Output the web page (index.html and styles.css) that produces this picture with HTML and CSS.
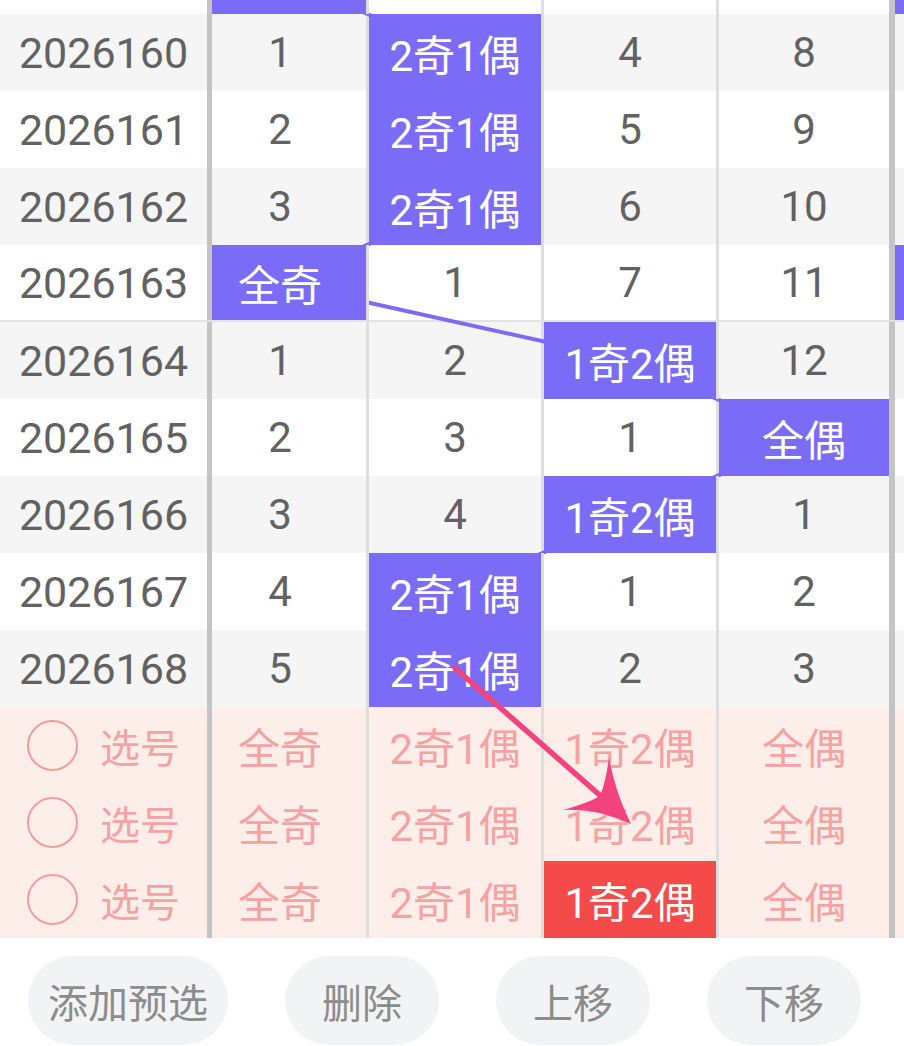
FILE: index.html
```html
<!DOCTYPE html>
<html lang="zh-CN">
<head>
  <meta charset="UTF-8" />
  <meta name="viewport" content="width=device-width, initial-scale=1.0"/>
  <title>奇偶走势</title>
  <link rel="stylesheet" href="styles.css">
</head>
<body>

  <div class="page">
    <div class="grid-view">
      <div class="grid-rows">

        <!-- строка прокручена за верхний край, видна только полоска -->
        <div class="row">
          <div class="issue"></div>
          <div class="cells">
            <div class="cell hit"></div>
            <div class="cell"></div>
            <div class="cell"></div>
            <div class="cell"></div>
            <div class="cell hit"></div>
          </div>
        </div>

        <div class="row odd">
          <div class="issue">2026160</div>
          <div class="cells">
            <div class="cell">1</div>
            <div class="cell hit">2奇1偶</div>
            <div class="cell">4</div>
            <div class="cell">8</div>
            <div class="cell"></div>
          </div>
        </div>

        <div class="row">
          <div class="issue">2026161</div>
          <div class="cells">
            <div class="cell">2</div>
            <div class="cell hit">2奇1偶</div>
            <div class="cell">5</div>
            <div class="cell">9</div>
            <div class="cell"></div>
          </div>
        </div>

        <div class="row odd">
          <div class="issue">2026162</div>
          <div class="cells">
            <div class="cell">3</div>
            <div class="cell hit">2奇1偶</div>
            <div class="cell">6</div>
            <div class="cell">10</div>
            <div class="cell"></div>
          </div>
        </div>

        <div class="row group-end">
          <div class="issue">2026163</div>
          <div class="cells">
            <div class="cell hit">全奇</div>
            <div class="cell">1</div>
            <div class="cell">7</div>
            <div class="cell">11</div>
            <div class="cell hit"></div>
          </div>
        </div>

        <div class="row odd">
          <div class="issue">2026164</div>
          <div class="cells">
            <div class="cell">1</div>
            <div class="cell">2</div>
            <div class="cell hit">1奇2偶</div>
            <div class="cell">12</div>
            <div class="cell"></div>
          </div>
        </div>

        <div class="row">
          <div class="issue">2026165</div>
          <div class="cells">
            <div class="cell">2</div>
            <div class="cell">3</div>
            <div class="cell">1</div>
            <div class="cell hit">全偶</div>
            <div class="cell"></div>
          </div>
        </div>

        <div class="row odd">
          <div class="issue">2026166</div>
          <div class="cells">
            <div class="cell">3</div>
            <div class="cell">4</div>
            <div class="cell hit">1奇2偶</div>
            <div class="cell">1</div>
            <div class="cell"></div>
          </div>
        </div>

        <div class="row">
          <div class="issue">2026167</div>
          <div class="cells">
            <div class="cell">4</div>
            <div class="cell hit">2奇1偶</div>
            <div class="cell">1</div>
            <div class="cell">2</div>
            <div class="cell"></div>
          </div>
        </div>

        <div class="row odd">
          <div class="issue">2026168</div>
          <div class="cells">
            <div class="cell">5</div>
            <div class="cell hit">2奇1偶</div>
            <div class="cell">2</div>
            <div class="cell">3</div>
            <div class="cell"></div>
          </div>
        </div>

        <div class="row pick">
          <div class="issue"><span class="radio"></span>选号</div>
          <div class="cells">
            <div class="cell">全奇</div>
            <div class="cell">2奇1偶</div>
            <div class="cell">1奇2偶</div>
            <div class="cell">全偶</div>
            <div class="cell"></div>
          </div>
        </div>

        <div class="row pick">
          <div class="issue"><span class="radio"></span>选号</div>
          <div class="cells">
            <div class="cell">全奇</div>
            <div class="cell">2奇1偶</div>
            <div class="cell">1奇2偶</div>
            <div class="cell">全偶</div>
            <div class="cell"></div>
          </div>
        </div>

        <div class="row pick">
          <div class="issue"><span class="radio"></span>选号</div>
          <div class="cells">
            <div class="cell">全奇</div>
            <div class="cell">2奇1偶</div>
            <div class="cell picked">1奇2偶</div>
            <div class="cell">全偶</div>
            <div class="cell"></div>
          </div>
        </div>

      </div>

      <!-- линия тренда между выпавшими ячейками -->
      <svg class="trend" width="904" height="938" viewBox="0 0 904 938">
        <polyline points="280,-24.5 455,52.5 455,129.5 455,206.5 280,283 630,360.5 804,437.5 630,514.5 455,591.5 455,668.5"
                  fill="none" stroke="#7b6cf8" stroke-width="4" stroke-linejoin="round"/>
      </svg>
    </div>

    <div class="actions">
      <button class="btn wide">添加预选</button>
      <button class="btn">删除</button>
      <button class="btn">上移</button>
      <button class="btn">下移</button>
    </div>

    <svg class="mark" width="904" height="1046" viewBox="0 0 904 1046">
      <line x1="455" y1="668" x2="603" y2="798" stroke="#f2437e" stroke-width="5.5" stroke-linecap="round"/>
      <path d="M631 824 Q615 792 609 757 Q606 782 600 796 Q588 803 563 810 Q598 808 631 824 Z" fill="#f2437e"/>
    </svg>
  </div>

</body>
</html>
```

FILE: styles.css
```css
* { box-sizing: border-box; }

body {
  margin: 0;
  font-family: Roboto, 'Noto Sans CJK SC', sans-serif;
  background: #fff;
  color: #626262;
}

.page {
  position: relative;
  width: 904px;
  height: 1046px;
  overflow: hidden;
}

.grid-view {
  position: relative;
  height: 938px;
  overflow: hidden;
}

/* прокрутка: первая строка видна частично */
.grid-rows {
  margin-top: -63px;
}

.row {
  display: flex;
  height: 77px;
  background: #fff;
}

.row.odd {
  background: #f5f5f5;
}

.row.group-end {
  border-bottom: 2px solid #e2e2e2;
}

.row.pick {
  background: #feeeea;
  color: #f5a2a2;
}

.issue {
  flex: none;
  width: 212px;
  border-right: 5px solid #c4c4c4;
  display: flex;
  align-items: center;
  justify-content: center;
  font-size: 43px;
}

.cells {
  flex: 1;
  display: flex;
  overflow: hidden;
}

.cell {
  flex: none;
  width: 175px;
  border-right: 3px solid #dedede;
  display: flex;
  align-items: center;
  justify-content: center;
  font-size: 42px;
}

.cell:first-child {
  margin-left: -18px;
}

.cell:nth-child(4) {
  width: 176px;
  border-right: 6px solid #c4c4c4;
}

.cell.hit {
  position: relative;
  z-index: 2;
  background: #7b6cf8;
  color: #fff;
}

.cell.picked {
  background: #f54a4a;
  color: #fff;
}

.pick .issue {
  justify-content: flex-start;
  padding-left: 27px;
  font-size: 40px;
}

.radio {
  width: 51px;
  height: 51px;
  border: 2px solid #f29c9c;
  border-radius: 50%;
  margin-right: 22px;
}

.trend {
  position: absolute;
  left: 0;
  top: 0;
  z-index: 1;
  overflow: visible;
}

.actions {
  display: flex;
  gap: 57px;
  padding: 18px 0 0 28px;
}

.btn {
  height: 89px;
  min-width: 154px;
  padding: 0 20px;
  border: none;
  border-radius: 45px;
  background: #f2f3f5;
  color: #8c8c8c;
  font-family: 'Noto Sans CJK SC', sans-serif;
  font-size: 40px;
}

.mark {
  position: absolute;
  left: 0;
  top: 0;
  z-index: 5;
  pointer-events: none;
}
```
